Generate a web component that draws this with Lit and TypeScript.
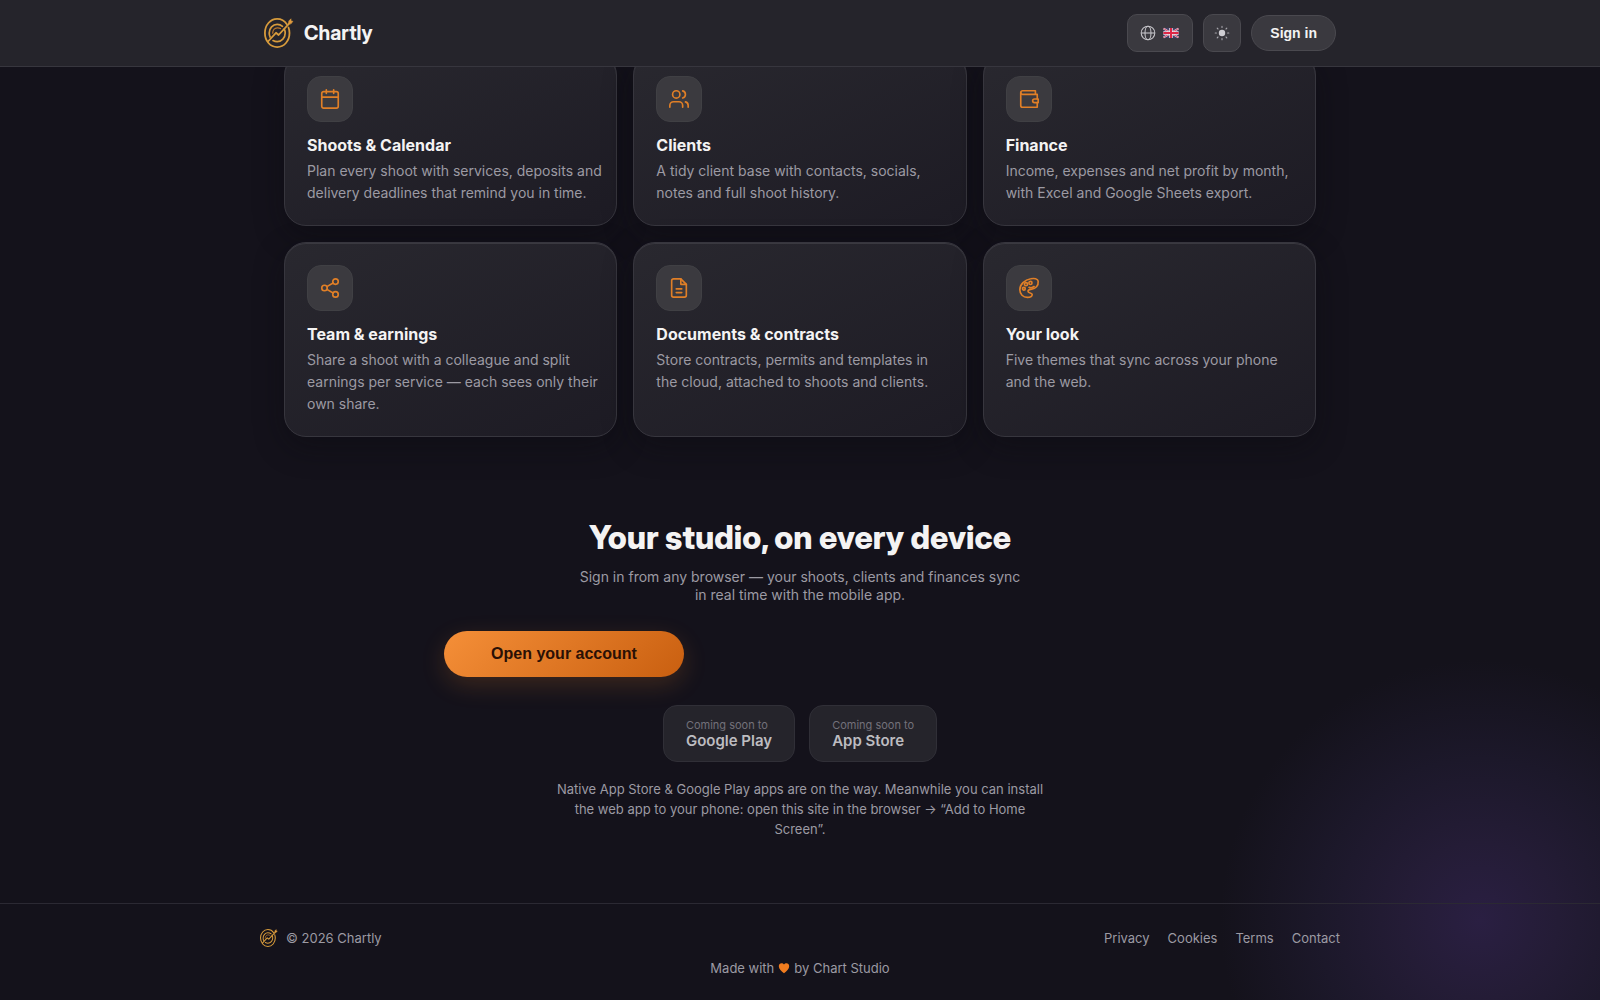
import { LitElement, html, svg, css } from "lit";
import { customElement } from "lit/decorators.js";

const icons = {
  calendar: svg`<rect x="3" y="4" width="18" height="18" rx="2"/><path d="M16 2v4M8 2v4M3 10h18"/>`,
  users: svg`<circle cx="9" cy="7" r="4"/><path d="M16 21v-2a4 4 0 0 0-4-4H6a4 4 0 0 0-4 4v2M22 21v-2a4 4 0 0 0-3-3.87M16 3.13a4 4 0 0 1 0 7.75"/>`,
  wallet: svg`<path d="M21 12V7H5a2 2 0 0 1 0-4h14v4"/><path d="M3 5v14a2 2 0 0 0 2 2h16v-5"/><path d="M18 12a2 2 0 0 0 0 4h4v-4Z"/>`,
  share: svg`<circle cx="18" cy="5" r="3"/><circle cx="6" cy="12" r="3"/><circle cx="18" cy="19" r="3"/><path d="m8.6 13.5 6.8 4M15.4 6.5l-6.8 4"/>`,
  file: svg`<path d="M14 2H6a2 2 0 0 0-2 2v16a2 2 0 0 0 2 2h12a2 2 0 0 0 2-2V8Z"/><path d="M14 2v6h6M9 13h6M9 17h6"/>`,
  palette: svg`<path d="M22 4.6C21.6 1.6 17.6 1.2 14 1.9 7.2 3 2 8 2 13.9c0 4.9 3.6 8.3 8.2 8.3 3 0 5.3-1.3 5.3-3.1 0-2.3-4.6-1.1-4.6-3.6 0-1.7 2-2 4.2-2.2C19 12.9 22.5 9.6 22 4.6Z"/><circle cx="8.7" cy="7.8" r="1.7"/><circle cx="13.6" cy="6.5" r="1.7"/><circle cx="6.4" cy="12.8" r="1.5"/><path d="M12 11.2c1.6.8 4 .4 5.6-.8"/>`,
};

const features = [
  { icon: icons.calendar, title: "Shoots & Calendar", text: "Plan every shoot with services, deposits and delivery deadlines that remind you in time." },
  { icon: icons.users, title: "Clients", text: "A tidy client base with contacts, socials, notes and full shoot history." },
  { icon: icons.wallet, title: "Finance", text: "Income, expenses and net profit by month, with Excel and Google Sheets export." },
  { icon: icons.share, title: "Team & earnings", text: "Share a shoot with a colleague and split earnings per service — each sees only their own share." },
  { icon: icons.file, title: "Documents & contracts", text: "Store contracts, permits and templates in the cloud, attached to shoots and clients." },
  { icon: icons.palette, title: "Your look", text: "Five themes that sync across your phone and the web." },
];

const logo = (size: number) => html`
  <svg width=${size} height=${size} viewBox="0 0 30 30" fill="none" stroke="#d79b3c" stroke-linecap="round" stroke-linejoin="round" overflow="visible" aria-hidden="true">
    <path d="M22.8 6.3C20.6 2.9 17.2.9 13.2.9 6.3.9.9 7.1.9 15s5.4 14.1 12.3 14.1S25.5 22.9 25.5 15c0-2-.3-3.8-1-5.5" stroke-width="1.8"/>
    <path d="M18.5 8.3c-1.5-1.3-3.3-2-5.3-2-4.4 0-8 3.9-8 8.7 0 1.5.3 2.8.9 4M9 22.6c1.3.7 2.7 1.1 4.2 1.1 4.4 0 8-3.9 8-8.7 0-1.5-.3-2.7-.9-3.9" stroke-width="1.7"/>
    <path d="M16.5 10.6c-1-.6-2.1-.9-3.3-.8-2.6.2-4.5 2.5-4.5 5.4" stroke-width="1.2" stroke="#b9772c"/>
    <path d="m4 23.5 8-8.7 2.6 2.2L26 4.6" stroke-width="1.8"/>
    <path d="m24.6 5.6.2-2.6L27 .8v2.2l1.9.3-1.7 2.3Z" fill="#e39a3e" stroke-width=".6"/>
  </svg>`;

@customElement("app-root")
export class AppRoot extends LitElement {
  static styles = css`
    :host {
      --display: "Inter Display", Inter, "Liberation Sans", sans-serif;
      display: block;
      min-height: 100vh;
      color: #f4f3f3;
      font-family: Inter, "Liberation Sans", sans-serif;
      background:
        radial-gradient(circle 260px at calc(100% - 120px) calc(100% - 80px), #2a1f42, #241c36 30%, #1c182a 62%, #14121b00),
        #14121b;
    }
    *, *::before, *::after { box-sizing: border-box; }
    h2, h3, p { margin: 0; }
    svg { display: block; flex: none; }
    a { color: inherit; text-decoration: none; }
    button { font-family: "Liberation Sans", Arial, sans-serif; color: inherit; cursor: pointer; }

    .bar {
      position: fixed;
      inset: 0 0 auto;
      z-index: 2;
      background: #25242b;
      border-bottom: 1px solid #37363e;
    }
    .bar-inner {
      display: flex;
      align-items: center;
      justify-content: space-between;
      max-width: 1120px;
      margin: 0 auto;
      padding: 14px 24px;
    }
    .brand {
      display: flex;
      align-items: center;
      gap: 10px;
      font-family: var(--display);
      font-size: 20px;
      line-height: 24px;
      font-weight: 700;
    }
    .actions { display: flex; align-items: center; gap: 10px; }
    .tool {
      display: flex;
      align-items: center;
      justify-content: center;
      gap: 7px;
      height: 38px;
      min-width: 38px;
      padding: 0 13px 0 12px;
      border: 1px solid #4a494f;
      border-radius: 10px;
      background: #3a393f;
    }
    .tool.square { padding: 0; }
    .sign-in {
      height: 36px;
      padding: 0 18px;
      border: 1px solid #4a494f;
      border-radius: 18px;
      background: #3a393f;
      font-size: 14px;
      font-weight: 700;
    }

    .features {
      display: grid;
      grid-template-columns: repeat(3, 1fr);
      gap: 16px;
      max-width: 1080px;
      margin: 0 auto;
      padding: 53px 24px 0;
    }
    .card {
      padding: 22px 13px 21px 22px;
      border: 1px solid #37363e;
      border-radius: 22px;
      background: linear-gradient(155deg, #29282f, #1d1b24);
      box-shadow: inset 0 1px 0 #3a3940, 0 10px 30px #0b0a1066;
    }
    .tile {
      display: grid;
      place-items: center;
      width: 46px;
      height: 46px;
      margin-bottom: 14px;
      border-radius: 14px;
      background: #3b3a3f;
      border: 1px solid #404044;
      color: #e07f27;
    }
    .card h3 {
      margin-bottom: 6px;
      font-size: 16px;
      line-height: 18px;
      font-weight: 700;
    }
    .card p {
      font-size: 14px;
      line-height: 22px;
      color: #9c9aa3;
    }

    .cta {
      display: flex;
      flex-direction: column;
      align-items: center;
      max-width: 760px;
      margin: 0 auto;
      padding: 80px 24px 64px;
      text-align: center;
    }
    .cta h2 {
      margin-bottom: 9px;
      font-family: var(--display);
      font-size: 32px;
      line-height: 42px;
      font-weight: 800;
    }
    .lead {
      max-width: 450px;
      font-size: 14px;
      line-height: 18px;
      color: #9c9aa3;
    }
    .open {
      align-self: flex-start;
      width: 240px;
      height: 46px;
      margin: 27px 0 28px;
      border: 0;
      border-radius: 23px;
      background: linear-gradient(135deg, #f58f38, #c95f10);
      box-shadow: 0 8px 24px #e07f2733;
      color: #2a1005;
      font-size: 16px;
      font-weight: 700;
    }
    .stores { display: flex; gap: 14px; margin-bottom: 17px; }
    .store {
      display: flex;
      flex-direction: column;
      padding: 13px 22px 11px;
      border: 1px solid #302f37;
      border-radius: 14px;
      background: #25242b;
      text-align: left;
      font-size: 15px;
      line-height: 18px;
      font-weight: 600;
      color: #bdbcc0;
    }
    .store small {
      font-size: 11px;
      line-height: 13px;
      font-weight: 400;
      color: #73717a;
    }
    .note {
      max-width: 490px;
      font-size: 13px;
      line-height: 20px;
      color: #9c9aa3;
    }

    .footer {
      border-top: 1px solid #2b2933;
      padding: 24px;
      font-size: 13px;
      color: #9c9aa3;
    }
    .footer-row {
      display: flex;
      justify-content: space-between;
      align-items: center;
      max-width: 1080px;
      margin: 0 auto 12px;
      line-height: 20px;
    }
    .copy { display: flex; align-items: center; gap: 8px; }
    .links { display: flex; gap: 18px; }
    .made {
      display: flex;
      align-items: center;
      justify-content: center;
      gap: 4px;
      line-height: 16px;
    }
  `;

  render() {
    return html`
      <header class="bar">
        <div class="bar-inner">
          <a class="brand" href="#">${logo(30)}<span>Chartly</span></a>
          <div class="actions">
            <button class="tool" type="button" aria-label="Language">
              <svg width="16" height="16" viewBox="0 0 16 16" fill="none" stroke="#c4c3c8" stroke-width="1.1" aria-hidden="true">
                <circle cx="8" cy="8" r="6.8"/><ellipse cx="8" cy="8" rx="3" ry="6.8"/><path d="M1.2 8h13.6"/>
              </svg>
              <svg width="16" height="12" viewBox="0 0 16 12" aria-hidden="true">
                <path d="M.4 1.2Q4 .2 8 1t7.6-.2v10Q12 11.8 8 11t-7.6.2Z" fill="#43416a"/>
                <path d="M.5 1.5 15.5 10.5M15.5 1.5.5 10.5" stroke="#e9dfe8" stroke-width="2"/>
                <path d="M.5 1.5 15.5 10.5M15.5 1.5.5 10.5" stroke="#d8334f" stroke-width=".9"/>
                <path d="M8 1v10M.4 6h15.2" stroke="#f1e8ef" stroke-width="3.4"/>
                <path d="M8 1v10M.4 6h15.2" stroke="#dd2746" stroke-width="2"/>
              </svg>
            </button>
            <button class="tool square" type="button" aria-label="Theme">
              <svg width="16" height="16" viewBox="0 0 16 16" stroke="#a9a8ae" stroke-width="1.1" stroke-linecap="round" aria-hidden="true">
                <circle cx="8" cy="8" r="3.2" fill="#cfced3" stroke="none"/>
                <path d="M8 1.2v1.2M8 13.6v1.2M1.2 8h1.2M13.6 8h1.2M3.2 3.2l.8.8M12 12l.8.8M12.8 3.2l-.8.8M4 12l-.8.8"/>
              </svg>
            </button>
            <button class="sign-in" type="button">Sign in</button>
          </div>
        </div>
      </header>

      <main>
        <section class="features">
          ${features.map(
            (f) => html`
              <article class="card">
                <div class="tile">
                  <svg width="22" height="22" viewBox="0 0 24 24" fill="none" stroke="currentColor" stroke-width="1.8" stroke-linecap="round" stroke-linejoin="round" aria-hidden="true">${f.icon}</svg>
                </div>
                <h3>${f.title}</h3>
                <p>${f.text}</p>
              </article>
            `,
          )}
        </section>

        <section class="cta">
          <h2>Your studio, on every device</h2>
          <p class="lead">Sign in from any browser — your shoots, clients and finances sync in real time with the mobile app.</p>
          <button class="open" type="button">Open your account</button>
          <div class="stores">
            <div class="store"><small>Coming soon to</small>Google Play</div>
            <div class="store"><small>Coming soon to</small>App Store</div>
          </div>
          <p class="note">Native App Store &amp; Google Play apps are on the way. Meanwhile you can install the web app to your phone: open this site in the browser → “Add to Home Screen”.</p>
        </section>
      </main>

      <footer class="footer">
        <div class="footer-row">
          <div class="copy">${logo(18)}<span>© 2026 Chartly</span></div>
          <nav class="links">
            <a href="#privacy">Privacy</a>
            <a href="#cookies">Cookies</a>
            <a href="#terms">Terms</a>
            <a href="#contact">Contact</a>
          </nav>
        </div>
        <div class="made">
          <span>Made with</span>
          <svg width="12" height="12" viewBox="0 0 12 12" fill="#f07c1f" aria-hidden="true">
            <path d="M6 11.2C3.5 9.3.8 7 .8 4.2.8 2.500 2 1.200 3.500 1.200c1 0 1.900.5 2.500 1.400.6-.9 1.500-1.400 2.500-1.400 1.500 0 2.700 1.300 2.700 3C11.200 7 8.500 9.300 6 11.200Z"/>
          </svg>
          <span>by Chart Studio</span>
        </div>
      </footer>
    `;
  }
}
